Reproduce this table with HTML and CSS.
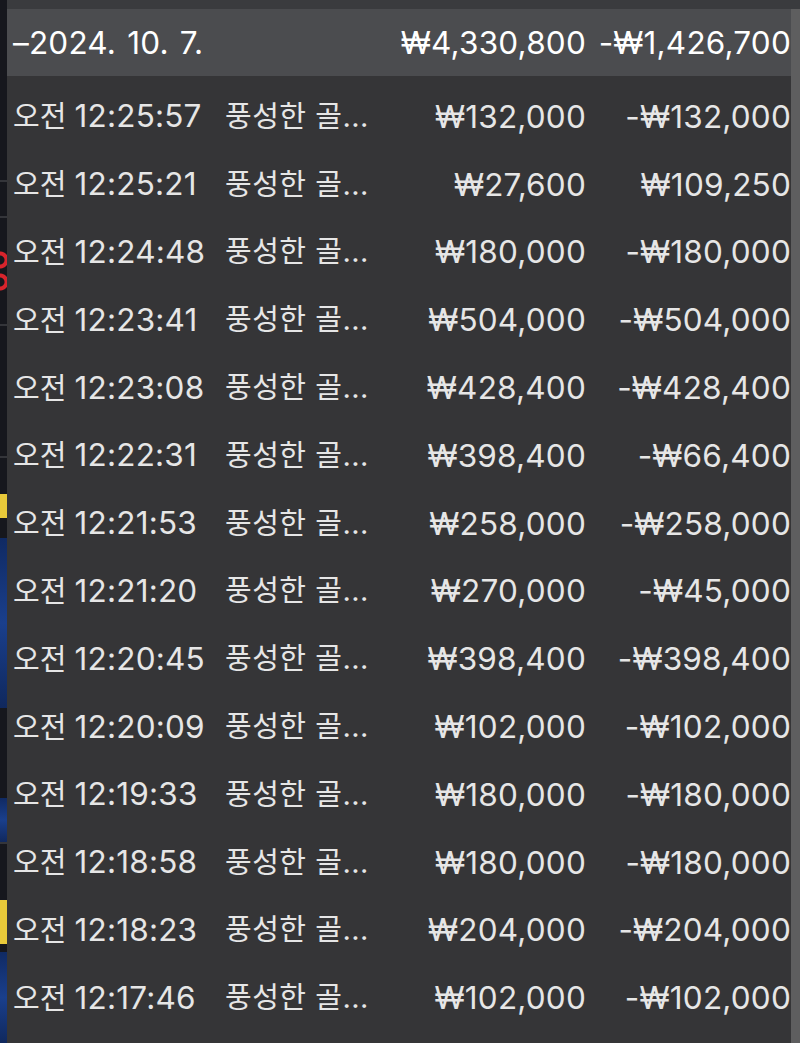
FILE: index.html
```html
<!DOCTYPE html>
<html lang="ko">

<head>
    <meta charset="UTF-8">
    <meta name="viewport" content="width=device-width, initial-scale=1.0">
    <title>베팅 내역</title>
    <link rel="stylesheet" href="styles.css">
</head>

<body>
    <div class="screen">
        <!-- page behind the sheet, only a slice is visible -->
        <div class="side-strip">
            <div class="seg seg-dark seg-180"></div>
            <div class="seg seg-line"></div>
            <div class="seg seg-dark seg-34"></div>
            <div class="seg seg-line"></div>
            <div class="seg seg-dark seg-30"></div>
            <div class="seg seg-red"></div>
            <div class="seg seg-dark seg-30"></div>
            <div class="seg seg-line"></div>
            <div class="seg seg-dark seg-130"></div>
            <div class="seg seg-line"></div>
            <div class="seg seg-dark seg-36"></div>
            <div class="seg seg-yellow"></div>
            <div class="seg seg-dark seg-20"></div>
            <div class="seg seg-blue seg-170"></div>
            <div class="seg seg-dark seg-90"></div>
            <div class="seg seg-blue seg-44"></div>
            <div class="seg seg-line"></div>
            <div class="seg seg-dark seg-56"></div>
            <div class="seg seg-yellow seg-44"></div>
            <div class="seg seg-dark seg-8"></div>
            <div class="seg seg-blue seg-fill"></div>
        </div>

        <div class="sheet">
            <div class="sheet-top"></div>

            <div class="row row-header">
                <span class="col-time num">–2024. 10. 7.</span>
                <span class="col-name"></span>
                <span class="col-amount num">₩4,330,800</span>
                <span class="col-result num">-₩1,426,700</span>
            </div>

            <div class="list" id="list"></div>
        </div>

        <div class="scrollbar">
            <div class="scroll-top"></div>
        </div>
    </div>

    <script>
        const rows = [
            ['12:25:57', '₩132,000', '-₩132,000'],
            ['12:25:21', '₩27,600', '₩109,250'],
            ['12:24:48', '₩180,000', '-₩180,000'],
            ['12:23:41', '₩504,000', '-₩504,000'],
            ['12:23:08', '₩428,400', '-₩428,400'],
            ['12:22:31', '₩398,400', '-₩66,400'],
            ['12:21:53', '₩258,000', '-₩258,000'],
            ['12:21:20', '₩270,000', '-₩45,000'],
            ['12:20:45', '₩398,400', '-₩398,400'],
            ['12:20:09', '₩102,000', '-₩102,000'],
            ['12:19:33', '₩180,000', '-₩180,000'],
            ['12:18:58', '₩180,000', '-₩180,000'],
            ['12:18:23', '₩204,000', '-₩204,000'],
            ['12:17:46', '₩102,000', '-₩102,000']
        ];

        const list = document.getElementById('list');
        list.innerHTML = rows.map(r => `
            <div class="row">
                <span class="col-time">오전 <span class="num">${r[0]}</span></span>
                <span class="col-name">풍성한 골...</span>
                <span class="col-amount num">${r[1]}</span>
                <span class="col-result num">${r[2]}</span>
            </div>
        `).join('');
    </script>
</body>

</html>
```

FILE: styles.css
```css
body {
    margin: 0;
    padding: 0;
    background-color: #353537;
    font-family: 'Inter', 'Noto Sans CJK KR', sans-serif;
    overflow: hidden;
}

.screen {
    display: flex;
    width: 800px;
    height: 1043px;
}

/* Left strip: the game page peeking out behind */
.side-strip {
    width: 7px;
    display: flex;
    flex-direction: column;
    background-color: #16171d;
}

.seg {
    flex-shrink: 0;
}

.seg-dark {
    background-color: #16171d;
}

.seg-line {
    height: 2px;
    background-color: #34353a;
}

.seg-red {
    height: 46px;
    background: radial-gradient(circle at 0 12px, transparent 4px, #d8242c 5px, #d8242c 8px, transparent 9px),
                radial-gradient(circle at 0 34px, transparent 4px, #d8242c 5px, #d8242c 8px, transparent 9px),
                #16171d;
}

.seg-yellow {
    height: 24px;
    background-color: #e8c93a;
}

.seg-blue {
    background: linear-gradient(180deg, #102a63, #1a3f8c 50%, #10285d);
}

.seg-8 { height: 8px; }
.seg-20 { height: 20px; }
.seg-30 { height: 30px; }
.seg-34 { height: 34px; }
.seg-36 { height: 36px; }
.seg-44 { height: 44px; }
.seg-56 { height: 56px; }
.seg-90 { height: 90px; }
.seg-130 { height: 130px; }
.seg-170 { height: 170px; }
.seg-180 { height: 180px; }
.seg-fill { flex: 1; }

/* The sheet with the bet list */
.sheet {
    flex: 1;
    display: flex;
    flex-direction: column;
    background-color: #353537;
}

.sheet-top {
    height: 9px;
    background-color: #3a3b3e;
}

.row {
    display: grid;
    grid-template-columns: 212px 1fr 200px 205px;
    align-items: center;
    height: 67.8px;
    padding-left: 6px;
    font-size: 29px;
    line-height: 40px;
    color: #e6e6e6;
    white-space: nowrap;
}

.row-header {
    height: 67px;
    background-color: #4b4c4f;
    color: #ffffff;
}

.list {
    padding-top: 7px;
}

/* digits are drawn a little wider than the hangul */
.num {
    font-size: 31.5px;
    letter-spacing: 0.2px;
}

.row-header .col-time {
    word-spacing: 2px;
}

.col-time,
.col-name {
    text-align: left;
}

.col-amount,
.col-result {
    text-align: right;
}

.col-name {
    letter-spacing: 0.5px;
}

/* Scrollbar track on the right */
.scrollbar {
    width: 9px;
    background-color: #5e5e5f;
    display: flex;
    flex-direction: column;
}

.scroll-top {
    height: 9px;
    background-color: #3a3b3e;
}
```
